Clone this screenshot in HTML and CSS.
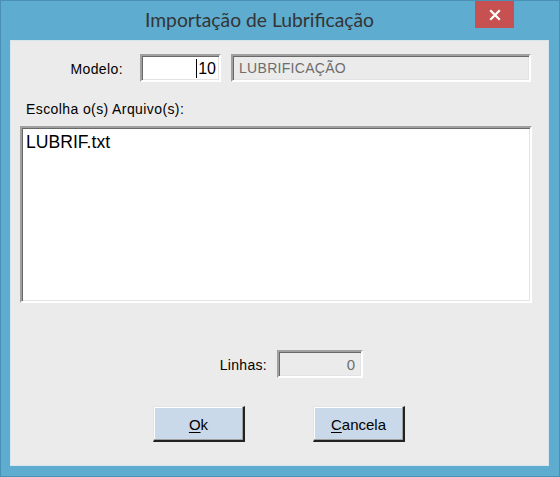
FILE: index.html
```html
<!DOCTYPE html>
<html>
<head>
<meta charset="utf-8">
<link rel="stylesheet" href="styles.css">
</head>
<body>
<div class="window">
  <div class="titlebar">
    <div class="title">Importação de Lubrificação</div>
    <div class="close">
      <svg width="12" height="12" viewBox="0 0 12 12"><path d="M2 2 L10 10 M10 2 L2 10" stroke="#fff" stroke-width="2.2" stroke-linecap="square"/></svg>
    </div>
  </div>
  <div class="client">
    <div class="row-model">
      <label class="lbl-model">Modelo:</label>
      <div class="field model-field"><span class="caret"></span>10</div>
      <div class="field desc-field disabled">LUBRIFICAÇÃO</div>
    </div>
    <div class="lbl-files">Escolha o(s) Arquivo(s):</div>
    <div class="listbox">
      <div class="item">LUBRIF.txt</div>
    </div>
    <div class="row-lines">
      <label class="lbl-lines">Linhas:</label>
      <div class="field lines-field disabled">0</div>
    </div>
    <div class="row-buttons">
      <button class="btn"><u>O</u>k</button>
      <button class="btn"><u>C</u>ancela</button>
    </div>
  </div>
</div>
</body>
</html>
```
FILE: styles.css
```css
* { box-sizing: border-box; }
html, body { margin: 0; padding: 0; }
body { width: 560px; height: 477px; overflow: hidden; background: #5eaccf; }

.window {
  width: 560px;
  height: 477px;
  background: #5eaccf;
  border: 1px solid #4a90b4;
  display: flex;
  flex-direction: column;
  padding: 0 10px 10px 9px;
}

.titlebar {
  position: relative;
  height: 39px;
  flex: none;
  display: flex;
  align-items: center;
  justify-content: center;
}
.title {
  font-family: Lato, "Noto Sans", sans-serif;
  font-size: 19.3px;
  color: #343434;
  margin-left: -40px;
  margin-top: -2px;
}
.close {
  position: absolute;
  right: 35px;
  top: 0;
  width: 39px;
  height: 27px;
  background: #c75050;
  display: flex;
  align-items: center;
  justify-content: center;
}

.client {
  flex: 1;
  background: #ebebeb;
  border: 1px solid #d7e6ee;
  font-family: "Liberation Sans", Arial, sans-serif;
  font-size: 14px;
  color: #000;
  display: flex;
  flex-direction: column;
}

.field {
  background: #fff;
  border-style: solid;
  border-width: 2px;
  border-color: #a0a0a0 #fff #fff #a0a0a0;
  box-shadow: inset 1px 1px 0 #696969, inset -1px -1px 0 #e3e3e3;
}
.field.disabled { background: #ebebeb; color: #6d6d6d; }

.row-model {
  display: flex;
  align-items: center;
  margin-top: 13px;
  height: 28px;
}
.lbl-model {
  width: 112px;
  text-align: right;
  margin-right: 17px;
  padding-top: 2px;
  letter-spacing: 0.4px;
}
.model-field {
  width: 81px;
  height: 28px;
  display: flex;
  align-items: center;
  justify-content: flex-end;
  padding-right: 3px;
  padding-top: 1px;
  font-size: 16px;
}
.caret {
  width: 1px;
  height: 19px;
  background: #000;
  margin-right: 1px;
}
.desc-field {
  width: 300px;
  height: 28px;
  margin-left: 10px;
  padding-left: 6px;
  display: flex;
  align-items: center;
  font-size: 14px;
  letter-spacing: 0.3px;
}

.lbl-files {
  margin-top: 18px;
  margin-left: 15px;
  line-height: 18px;
  letter-spacing: 0.4px;
}

.listbox {
  margin-top: 8px;
  margin-left: 9px;
  width: 512px;
  height: 177px;
  padding: 4px 4px;
  background: #fff;
  border-style: solid;
  border-width: 2px;
  border-color: #a0a0a0 #fff #fff #a0a0a0;
  box-shadow: inset 1px 1px 0 #696969, inset -1px -1px 0 #e3e3e3;
}
.item { font-size: 17.6px; line-height: 20px; }

.row-lines {
  display: flex;
  align-items: center;
  margin-top: 47px;
  height: 28px;
}
.lbl-lines {
  width: 256px;
  text-align: right;
  margin-right: 10px;
  padding-top: 2px;
  letter-spacing: 0.3px;
}
.lines-field {
  width: 86px;
  height: 28px;
  display: flex;
  align-items: center;
  justify-content: flex-end;
  padding-right: 6px;
  font-size: 15px;
}

.row-buttons {
  display: flex;
  margin-top: 28px;
  margin-left: 142px;
  gap: 68px;
}
.btn {
  width: 92px;
  height: 36px;
  background: #c9d9e9;
  font-family: "Liberation Sans", Arial, sans-serif;
  font-size: 15px;
  color: #000;
  border-style: solid;
  border-width: 1px 2px 2px 1px;
  border-color: #e3e3e3 #222 #222 #e3e3e3;
  box-shadow: inset -1px -1px 0 #a0a0a0, inset 1px 1px 0 #fff;
  padding: 2px 0 0 0;
}
.btn u { text-underline-offset: 2px; }
```
